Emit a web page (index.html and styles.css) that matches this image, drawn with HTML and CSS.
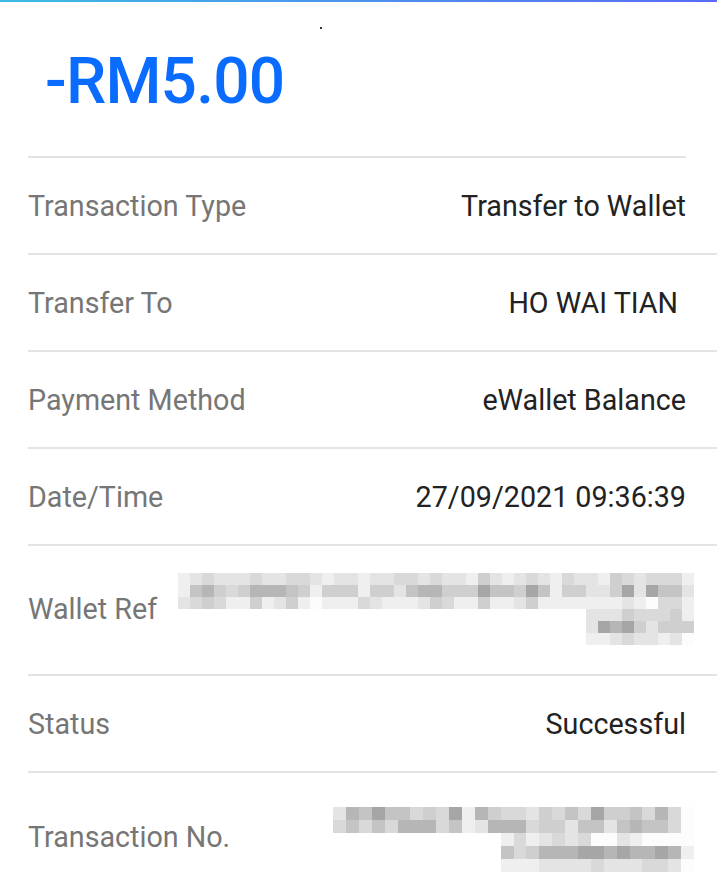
FILE: index.html
```html
<!DOCTYPE html>
<html>
<head>
<meta charset="utf-8">
<link rel="stylesheet" href="styles.css">
</head>
<body>
<div class="topline"></div>
<span class="speck"></span>
<div class="amount">-RM5.00</div>
<div class="divider"></div>
<div class="list">
  <div class="row"><span class="label">Transaction Type</span><span class="value">Transfer to Wallet</span></div>
  <div class="row"><span class="label">Transfer To</span><span class="value value-trail">HO WAI TIAN</span></div>
  <div class="row"><span class="label">Payment Method</span><span class="value">eWallet Balance</span></div>
  <div class="row"><span class="label">Date/Time</span><span class="value">27/09/2021 09:36:39</span></div>
  <div class="row row-tall"><span class="label">Wallet Ref</span><div class="pix pix-wallet" data-rows="1232223223321221223323221421232132214323331|1564346665414441442566444755475144224727552|2343114124101113211124311411241111111210331|                                  222433341|                                  276742444|                                  112322120"></div></div>
  <div class="row"><span class="label">Status</span><span class="value">Successful</span></div>
  <div class="row row-txn"><span class="label label-up">Transaction No.</span><div class="pix pix-txn" data-rows="2657553437164332435374453630|3535366635126663442552565530|             131232300210000|             534666776766761|             111222232223320"></div></div>
</div>
<script src="script.js"></script>
</body>
</html>
```
FILE: styles.css
```css
html, body {
  margin: 0;
  padding: 0;
  background: #ffffff;
}
body {
  position: relative;
  font-family: Roboto, "Liberation Sans", sans-serif;
  width: 717px;
  overflow: hidden;
}
.topline {
  height: 2px;
  background: linear-gradient(90deg, #3dbbe3, #5b6af7);
}
.speck {
  position: absolute;
  left: 320px;
  top: 27px;
  width: 2px;
  height: 2px;
  background: #333;
}
.amount {
  margin: 42px 0 0 45px;
  font-size: 64px;
  line-height: 75px;
  font-weight: 500;
  color: #0a6cff;
  letter-spacing: -0.8px;
}
.divider {
  margin: 37px 31px 0 28px;
  height: 2px;
  background: #e4e4e4;
}
.list {
  margin-left: 28px;
}
.row {
  display: flex;
  justify-content: space-between;
  align-items: center;
  height: 95px;
  padding-right: 31px;
  border-bottom: 2px solid #e4e4e4;
  font-size: 28.7px;
}
.row-tall {
  height: auto;
  padding-top: 27px;
  padding-bottom: 29px;
}
.row-txn {
  height: auto;
  padding-top: 34px;
  padding-bottom: 20px;
  border-bottom: none;
}
.label {
  color: #767676;
}
.label-up {
  padding-bottom: 6px;
}
.value {
  color: #222222;
}
.value-trail {
  padding-right: 8px;
}
.pix {
  display: grid;
  margin-right: -8px;
}
.pix-wallet {
  grid-template-columns: repeat(43, 12px);
  grid-auto-rows: 12px;
}
.pix-txn {
  grid-template-columns: repeat(28, 12.9px);
  grid-auto-rows: 13px;
}
.s { display: block; }
.s0 { background: #fcfcfc; }
.s1 { background: #efefef; }
.s2 { background: #e4e4e4; }
.s3 { background: #d9d9d9; }
.s4 { background: #cfcfcf; }
.s5 { background: #c4c4c4; }
.s6 { background: #b6b6b6; }
.s7 { background: #a6a6a6; }
.sx { background: transparent; }
```
FILE: script.js
```js
document.querySelectorAll('.pix').forEach(function (grid) {
  var rows = grid.getAttribute('data-rows').split('|');
  rows.forEach(function (r) {
    for (var i = 0; i < r.length; i++) {
      var c = document.createElement('span');
      var ch = r.charAt(i);
      c.className = 's ' + (ch === ' ' ? 'sx' : 's' + ch);
      grid.appendChild(c);
    }
  });
});
```
